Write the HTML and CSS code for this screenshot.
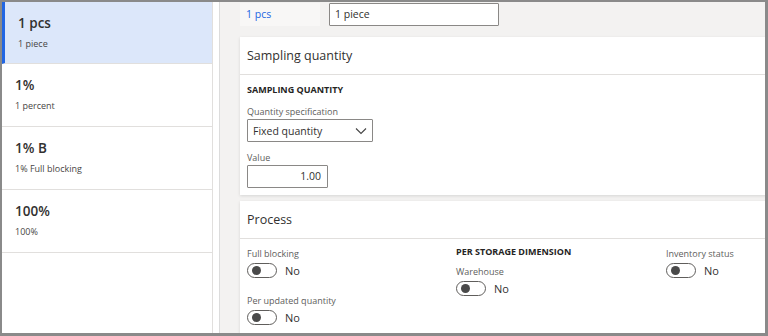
FILE: index.html
```html
<!DOCTYPE html>
<html lang="en">

<head>
    <meta charset="UTF-8">
    <title>Quality sampling</title>
    <link rel="stylesheet" href="styles.css">
</head>

<body>
    <div class="frame">
        <div class="list">
            <div class="list-item selected">
                <div class="item-title">1 pcs</div>
                <div class="item-sub">1 piece</div>
            </div>
            <div class="list-item">
                <div class="item-title">1%</div>
                <div class="item-sub">1 percent</div>
            </div>
            <div class="list-item">
                <div class="item-title">1% B</div>
                <div class="item-sub">1% Full blocking</div>
            </div>
            <div class="list-item">
                <div class="item-title">100%</div>
                <div class="item-sub">100%</div>
            </div>
        </div>
        <div class="gutter"></div>
        <div class="content">
            <div class="top-row">
                <div class="id-box">1 pcs</div>
                <div class="text-input name-input">1 piece</div>
            </div>

            <div class="card">
                <div class="card-header">Sampling quantity</div>
                <div class="card-body">
                    <div class="group-title">SAMPLING QUANTITY</div>
                    <div class="field-label">Quantity specification</div>
                    <div class="text-input select">
                        <span>Fixed quantity</span>
                        <svg class="chevron" width="12" height="8" viewBox="0 0 12 8">
                            <path d="M1 1.5 L6 6.5 L11 1.5" fill="none" stroke="#444" stroke-width="1.1" />
                        </svg>
                    </div>
                    <div class="field-label value-label">Value</div>
                    <div class="text-input number-input">1.00</div>
                </div>
            </div>

            <div class="card process-card">
                <div class="card-header">Process</div>
                <div class="card-body columns">
                    <div class="column">
                        <div class="field-label">Full blocking</div>
                        <div class="toggle-row"><span class="toggle"></span><span>No</span></div>
                        <div class="field-label second">Per updated quantity</div>
                        <div class="toggle-row"><span class="toggle"></span><span>No</span></div>
                    </div>
                    <div class="column">
                        <div class="group-title">PER STORAGE DIMENSION</div>
                        <div class="field-label">Warehouse</div>
                        <div class="toggle-row"><span class="toggle"></span><span>No</span></div>
                    </div>
                    <div class="column">
                        <div class="field-label">Inventory status</div>
                        <div class="toggle-row"><span class="toggle"></span><span>No</span></div>
                    </div>
                </div>
            </div>
        </div>
    </div>
</body>

</html>
```

FILE: styles.css
```css
body {
    margin: 0;
    font-family: 'Open Sans', 'Noto Sans', sans-serif;
    color: #323130;
}

.frame {
    width: 768px;
    height: 336px;
    box-sizing: border-box;
    border: 2px solid #8a8a8a;
    border-right-width: 3px;
    border-bottom-width: 3px;
    display: flex;
    overflow: hidden;
    background: #fff;
}

/* left list */
.list {
    width: 210px;
    flex-shrink: 0;
    border-right: 1px solid #e1dfdd;
}

.list-item {
    height: 62px;
    border-bottom: 1px solid #e1dfdd;
    padding: 11px 0 0 13px;
    box-sizing: border-box;
}

.list-item.selected {
    background: #dce7fa;
    border-left: 3px solid #2266e3;
    padding-left: 13px;
}

.list-item + .list-item {
    height: 63px;
}

.item-title {
    font-size: 13.5px;
    font-weight: 600;
    line-height: 20px;
}

.item-sub {
    font-size: 9px;
    line-height: 14px;
    margin-top: 4px;
    color: #484644;
}

.gutter {
    width: 6px;
    flex-shrink: 0;
    border-right: 1px solid #dcdcdc;
}

/* content */
.content {
    flex: 1;
    background: #f3f2f1;
    padding: 1px 0 0 20px;
    min-width: 0;
}

.top-row {
    display: flex;
    gap: 9px;
    height: 23px;
}

.id-box {
    width: 80px;
    background: #f8f7f6;
    color: #2266e3;
    font-size: 10.5px;
    line-height: 23px;
    padding-left: 6px;
    box-sizing: border-box;
}

.text-input {
    background: #fff;
    border: 1px solid #8a8886;
    border-radius: 1px;
    font-size: 10.5px;
    box-sizing: border-box;
    color: #323130;
}

.name-input {
    width: 170px;
    height: 23px;
    line-height: 21px;
    padding-left: 5px;
}

.card {
    margin-top: 11px;
    background: #fff;
    width: 640px;
    box-shadow: 0 1px 3px rgba(0, 0, 0, 0.12);
}

.card-header {
    height: 38px;
    line-height: 38px;
    padding-left: 7px;
    font-size: 12.5px;
    font-weight: 500;
    border-bottom: 1px solid #e1dfdd;
    box-sizing: border-box;
}

.card-body {
    padding: 8px 0 7px 7px;
}

.group-title {
    font-size: 9px;
    font-weight: 700;
    line-height: 14px;
    color: #252423;
}

.field-label {
    font-size: 9px;
    line-height: 14px;
    color: #605e5c;
    margin-top: 8px;
}

.select {
    width: 126px;
    height: 23px;
    display: flex;
    align-items: center;
    justify-content: space-between;
    padding: 0 5px;
}

.value-label {
    margin-top: 9px;
}

.number-input {
    width: 81px;
    height: 23px;
    line-height: 21px;
    text-align: right;
    padding-right: 6px;
}

.process-card {
    margin-top: 6px;
}

.columns {
    display: flex;
    padding-top: 0;
    padding-bottom: 30px;
}

.column {
    width: 209px;
    flex-shrink: 0;
}

.column + .column {
    width: 210px;
}

.column .group-title {
    margin-top: 6px;
}

.column .group-title + .field-label {
    margin-top: 6px;
}

.toggle-row {
    display: flex;
    align-items: center;
    gap: 8px;
    font-size: 11px;
    margin-top: 1px;
    height: 16px;
}

.toggle {
    width: 30px;
    height: 15px;
    border: 1px solid #605e5c;
    border-radius: 8px;
    box-sizing: border-box;
    position: relative;
}

.toggle::after {
    content: '';
    position: absolute;
    left: 4px;
    top: 2px;
    width: 9px;
    height: 9px;
    border-radius: 50%;
    background: #4a4a4a;
}

.field-label.second {
    margin-top: 16px;
}
```
